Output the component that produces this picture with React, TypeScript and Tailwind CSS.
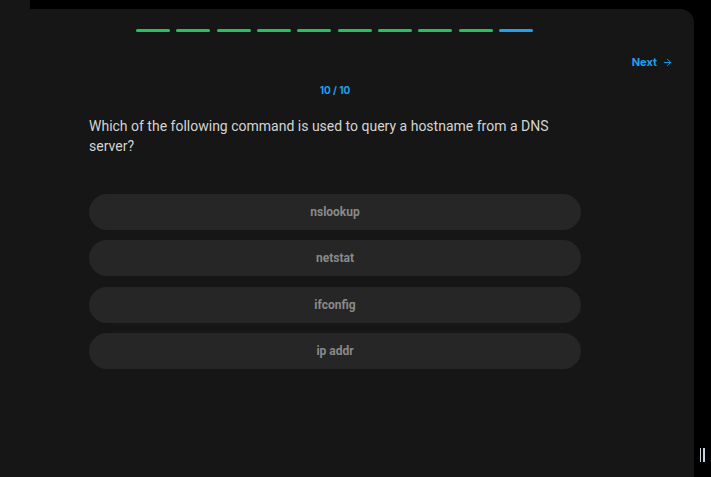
import React from "react";
import { ArrowRight } from "lucide-react";

const options = ["nslookup", "netstat", "ifconfig", "ip addr"];

export default function App() {
    const total = 10;
    const current = 10;

    return (
        <div className="w-[711px] h-[477px] bg-black flex overflow-hidden" style={{ fontFamily: "Roboto, 'Liberation Sans', sans-serif" }}>
            <div className="w-[694px] flex flex-col">
                <div className="h-[9px] w-[30px] bg-[#161616]"></div>
                <div className="flex-1 bg-[#161616] rounded-tr-[14px] flex flex-col">
                    <div className="flex justify-center gap-[6.4px] pt-[20px] pr-[25px]">
                        {Array.from({ length: total }).map((_, i) => (
                            <div
                                key={i}
                                className={i === current - 1 ? "w-[34px] h-[3px] rounded-full bg-[#1ea1f1]" : "w-[34px] h-[3px] rounded-full bg-[#22c35e]"}
                            ></div>
                        ))}
                    </div>
                    <div className="flex justify-end pr-[21px] mt-[22px]">
                        <button className="flex items-center gap-[5px] text-[#1ea1f1] text-[11px] font-bold" style={{ fontFamily: "Inter, sans-serif" }}>
                            Next
                            <ArrowRight size={11} strokeWidth={2} />
                        </button>
                    </div>
                    <div className="w-[492px] ml-[89px] flex flex-col">
                        <div className="text-center text-[#1ea1f1] text-[10px] font-bold mt-[12px]" style={{ fontFamily: "Inter, sans-serif" }}>
                            {current} / {total}
                        </div>
                        <p className="text-[#d4d4d4] text-[14px] leading-[20px] mt-[18px]">
                            Which of the following command is used to query a hostname from a DNS server?
                        </p>
                        <div className="flex flex-col gap-[10.5px] mt-[38px]">
                            {options.map((opt) => (
                                <button
                                    key={opt}
                                    className="h-[36px] w-full rounded-full bg-[#262626] text-[#8a8a8a] text-[12px] font-bold"
                                >
                                    {opt}
                                </button>
                            ))}
                        </div>
                    </div>
                </div>
            </div>
            <div className="flex-1 flex items-end justify-center pb-[15px]">
                <div className="flex gap-[2px] mr-[1px]">
                    <div className="w-[1.5px] h-[14px] bg-[#c9d3dd]"></div>
                    <div className="w-[1.5px] h-[14px] bg-[#c9d3dd]"></div>
                </div>
            </div>
        </div>
    );
}
